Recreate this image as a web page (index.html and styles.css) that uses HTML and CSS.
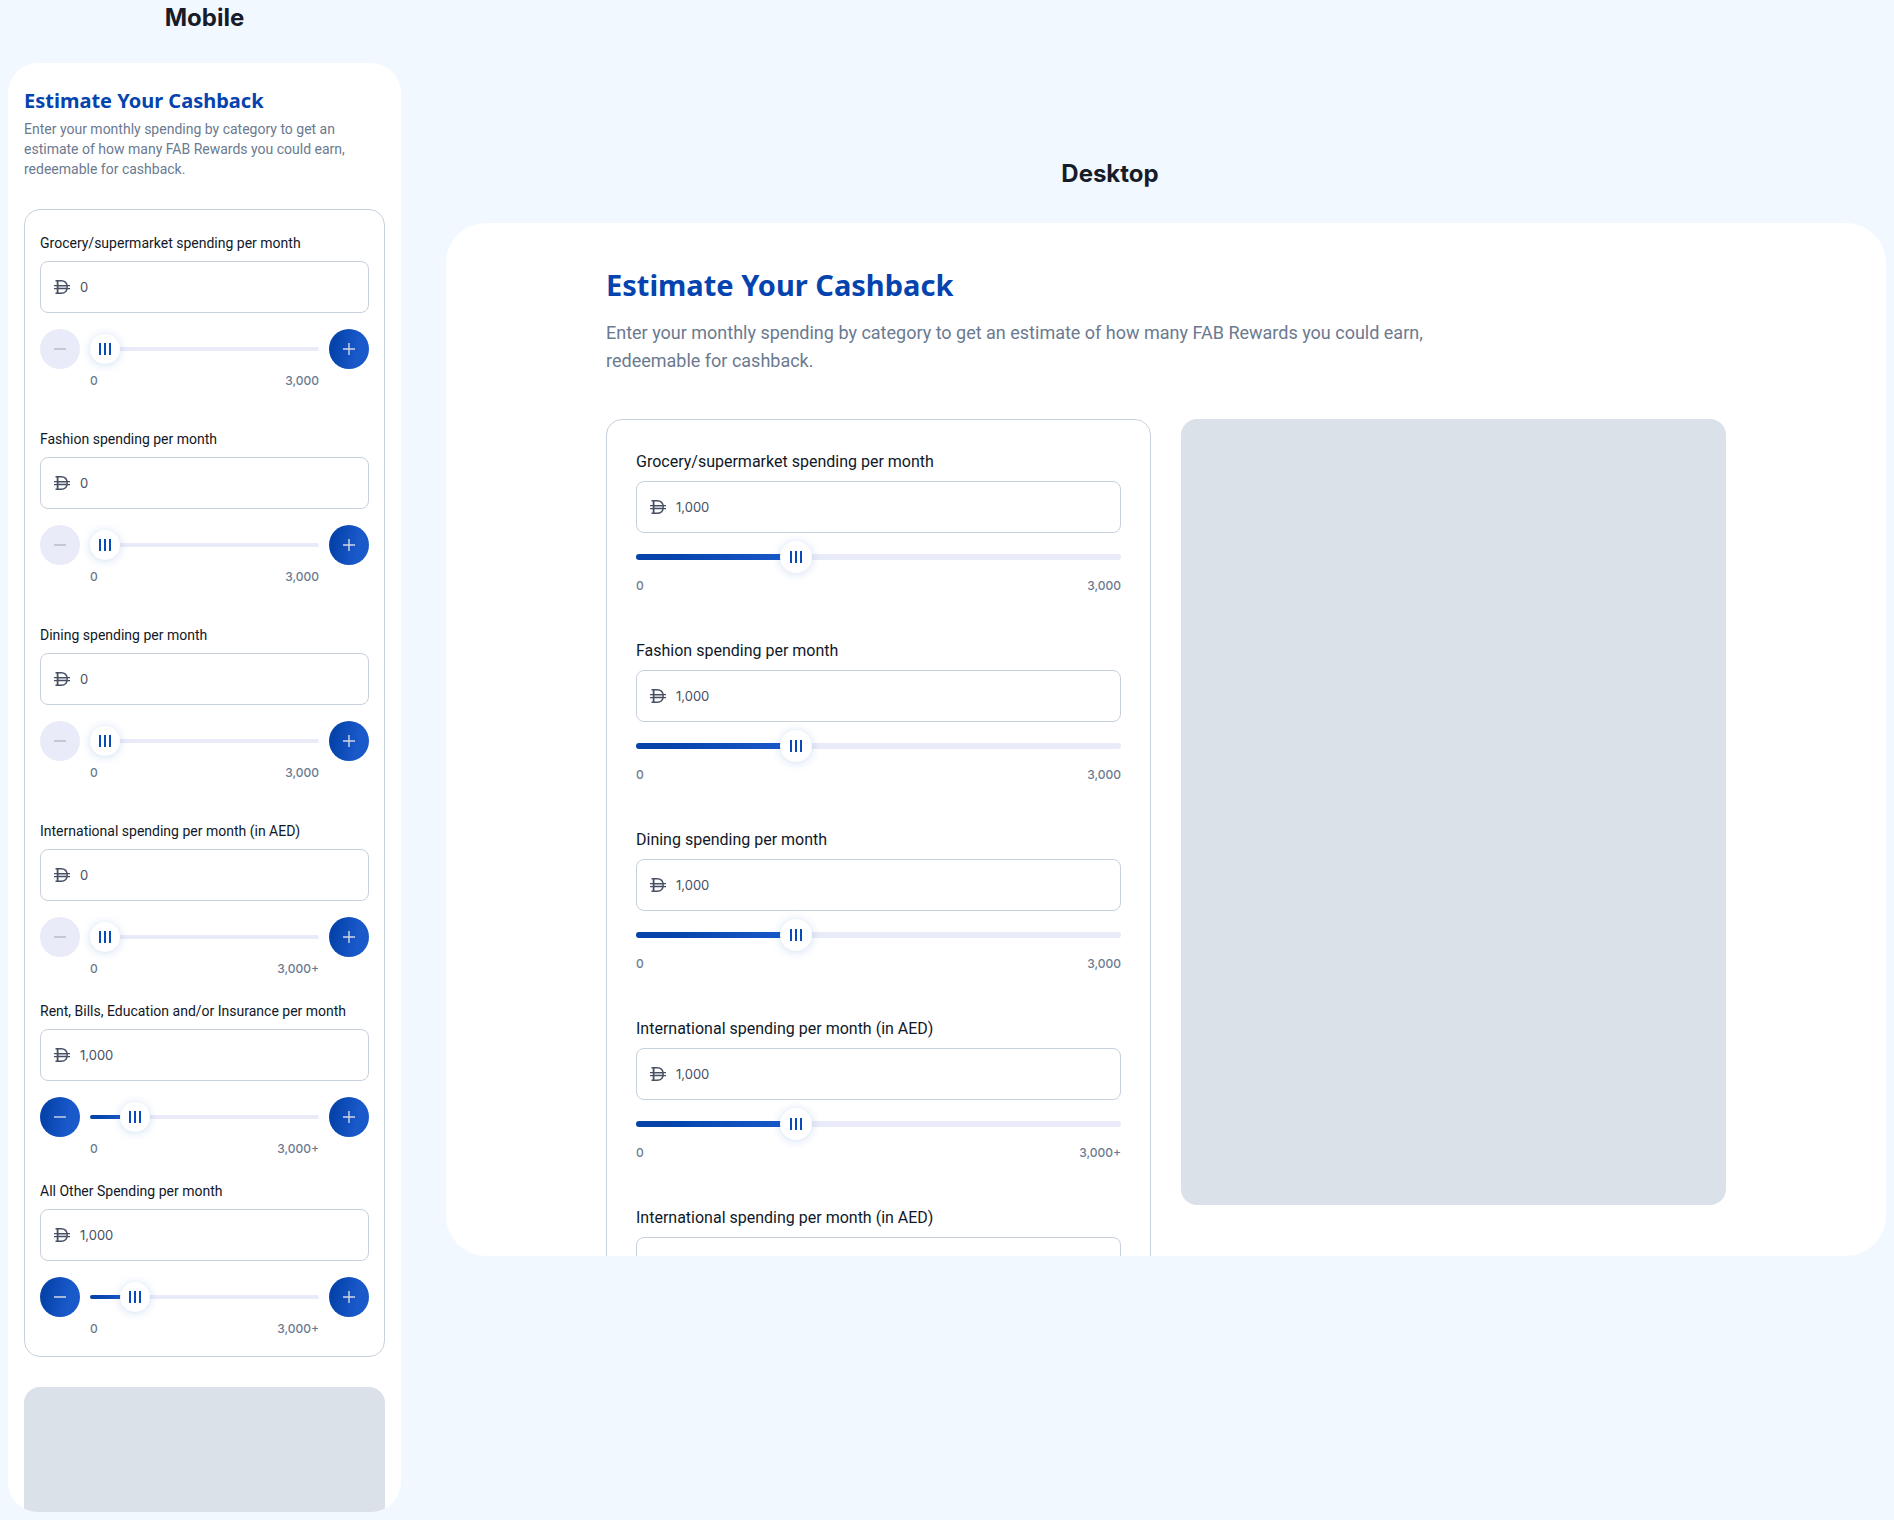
FILE: index.html
```html
<!DOCTYPE html>
<html lang="en">
  <head>
    <meta charset="utf-8">
    <meta name="viewport" content="width=device-width, initial-scale=1">
    <title>Cashback calculator</title>
    <link rel="stylesheet" href="styles.css">
  </head>
  <body>
    <svg class="sprite" aria-hidden="true">
      <symbol id="dirham" viewBox="0 0 16 14">
        <path d="M1.5 .7H7C11 .7 13.2 3 13.2 7S11 13.3 7 13.3H1.5" fill="none" stroke="currentColor" stroke-width="1.4"/>
        <path d="M3 5.7H13V8.5H3Z" fill="currentColor" opacity=".3"/>
        <path d="M3.6 .7V13.3" stroke="currentColor" stroke-width="1.8"/>
        <path d="M0 5.6H16M0 8.6H16" fill="none" stroke="currentColor" stroke-width="1.2"/>
      </symbol>
      <symbol id="minus" viewBox="0 0 12 12">
        <path d="M0 6H12" stroke="currentColor" stroke-width="1.4"/>
      </symbol>
      <symbol id="plus" viewBox="0 0 12 12">
        <path d="M0 6H12M6 0V12" stroke="currentColor" stroke-width="1.4"/>
      </symbol>
    </svg>

    <main class="boards">
      <section class="board mobile">
        <h2 class="board-name">Mobile</h2>
        <div class="card">
          <h1 class="title">Estimate Your Cashback</h1>
          <p class="intro">Enter your monthly spending by category to get an estimate of how many FAB Rewards you could earn, redeemable for cashback.</p>
          <form class="form">
            <div class="field">
              <label class="label" for="m-grocery">Grocery/supermarket spending per month</label>
              <div class="amount"><svg class="currency"><use href="#dirham"/></svg><input id="m-grocery" type="text" value="0"></div>
              <div class="controls">
                <button class="step" type="button" aria-label="Decrease" disabled><svg><use href="#minus"/></svg></button>
                <input class="slider" type="range" aria-label="Grocery/supermarket spending per month" min="0" max="3000" value="0" style="--fill: 0%">
                <button class="step" type="button" aria-label="Increase"><svg><use href="#plus"/></svg></button>
              </div>
              <div class="limits"><span>0</span><span>3,000</span></div>
            </div>
            <div class="field">
              <label class="label" for="m-fashion">Fashion spending per month</label>
              <div class="amount"><svg class="currency"><use href="#dirham"/></svg><input id="m-fashion" type="text" value="0"></div>
              <div class="controls">
                <button class="step" type="button" aria-label="Decrease" disabled><svg><use href="#minus"/></svg></button>
                <input class="slider" type="range" aria-label="Fashion spending per month" min="0" max="3000" value="0" style="--fill: 0%">
                <button class="step" type="button" aria-label="Increase"><svg><use href="#plus"/></svg></button>
              </div>
              <div class="limits"><span>0</span><span>3,000</span></div>
            </div>
            <div class="field">
              <label class="label" for="m-dining">Dining spending per month</label>
              <div class="amount"><svg class="currency"><use href="#dirham"/></svg><input id="m-dining" type="text" value="0"></div>
              <div class="controls">
                <button class="step" type="button" aria-label="Decrease" disabled><svg><use href="#minus"/></svg></button>
                <input class="slider" type="range" aria-label="Dining spending per month" min="0" max="3000" value="0" style="--fill: 0%">
                <button class="step" type="button" aria-label="Increase"><svg><use href="#plus"/></svg></button>
              </div>
              <div class="limits"><span>0</span><span>3,000</span></div>
            </div>
            <div class="field">
              <label class="label" for="m-international">International spending per month (in AED)</label>
              <div class="amount"><svg class="currency"><use href="#dirham"/></svg><input id="m-international" type="text" value="0"></div>
              <div class="controls">
                <button class="step" type="button" aria-label="Decrease" disabled><svg><use href="#minus"/></svg></button>
                <input class="slider" type="range" aria-label="International spending per month" min="0" max="6600" value="0" style="--fill: 0%">
                <button class="step" type="button" aria-label="Increase"><svg><use href="#plus"/></svg></button>
              </div>
              <div class="limits"><span>0</span><span>3,000+</span></div>
            </div>
            <div class="field tight">
              <label class="label" for="m-bills">Rent, Bills, Education and/or Insurance per month</label>
              <div class="amount"><svg class="currency"><use href="#dirham"/></svg><input id="m-bills" type="text" value="1,000"></div>
              <div class="controls">
                <button class="step" type="button" aria-label="Decrease"><svg><use href="#minus"/></svg></button>
                <input class="slider" type="range" aria-label="Rent, bills, education and/or insurance per month" min="0" max="6600" value="1000" style="--fill: 15%">
                <button class="step" type="button" aria-label="Increase"><svg><use href="#plus"/></svg></button>
              </div>
              <div class="limits"><span>0</span><span>3,000+</span></div>
            </div>
            <div class="field tight">
              <label class="label" for="m-other">All Other Spending per month</label>
              <div class="amount"><svg class="currency"><use href="#dirham"/></svg><input id="m-other" type="text" value="1,000"></div>
              <div class="controls">
                <button class="step" type="button" aria-label="Decrease"><svg><use href="#minus"/></svg></button>
                <input class="slider" type="range" aria-label="All other spending per month" min="0" max="6600" value="1000" style="--fill: 15%">
                <button class="step" type="button" aria-label="Increase"><svg><use href="#plus"/></svg></button>
              </div>
              <div class="limits"><span>0</span><span>3,000+</span></div>
            </div>
          </form>
          <div class="result"></div>
        </div>
      </section>

      <section class="board desktop">
        <h2 class="board-name">Desktop</h2>
        <div class="card">
          <div class="content">
            <h1 class="title">Estimate Your Cashback</h1>
            <p class="intro">Enter your monthly spending by category to get an estimate of how many FAB Rewards you could earn, redeemable for cashback.</p>
            <div class="columns">
              <form class="form">
                <div class="field">
                  <label class="label" for="d-grocery">Grocery/supermarket spending per month</label>
                  <div class="amount"><svg class="currency"><use href="#dirham"/></svg><input id="d-grocery" type="text" value="1,000"></div>
                  <input class="slider" type="range" aria-label="Grocery/supermarket spending per month" min="0" max="3150" value="1000" style="--fill: 32%">
                  <div class="limits"><span>0</span><span>3,000</span></div>
                </div>
                <div class="field">
                  <label class="label" for="d-fashion">Fashion spending per month</label>
                  <div class="amount"><svg class="currency"><use href="#dirham"/></svg><input id="d-fashion" type="text" value="1,000"></div>
                  <input class="slider" type="range" aria-label="Fashion spending per month" min="0" max="3150" value="1000" style="--fill: 32%">
                  <div class="limits"><span>0</span><span>3,000</span></div>
                </div>
                <div class="field">
                  <label class="label" for="d-dining">Dining spending per month</label>
                  <div class="amount"><svg class="currency"><use href="#dirham"/></svg><input id="d-dining" type="text" value="1,000"></div>
                  <input class="slider" type="range" aria-label="Dining spending per month" min="0" max="3150" value="1000" style="--fill: 32%">
                  <div class="limits"><span>0</span><span>3,000</span></div>
                </div>
                <div class="field">
                  <label class="label" for="d-international">International spending per month (in AED)</label>
                  <div class="amount"><svg class="currency"><use href="#dirham"/></svg><input id="d-international" type="text" value="1,000"></div>
                  <input class="slider" type="range" aria-label="International spending per month" min="0" max="3150" value="1000" style="--fill: 32%">
                  <div class="limits"><span>0</span><span>3,000+</span></div>
                </div>
                <div class="field">
                  <label class="label" for="d-international-2">International spending per month (in AED)</label>
                  <div class="amount"><input id="d-international-2" type="text"></div>
                </div>
              </form>
              <div class="result"></div>
            </div>
          </div>
        </div>
      </section>
    </main>
  </body>
</html>
```

FILE: styles.css
```css
* { box-sizing: border-box; }
body {
  margin: 0;
  background-color: #f1f8ff;
  font-family: Roboto, "Liberation Sans", sans-serif;
  font-size: 14px;
  color: #101828;
}
h1, h2, p { margin: 0; }
.sprite {
  position: absolute;
  width: 0;
  height: 0;
}
.boards {
  display: grid;
  grid-template-columns: 393px 1fr;
  gap: 45px;
  align-items: start;
  padding: 0 8px 8px;
}
.board-name {
  padding: 2px 0 29px;
  font-family: Inter, "Liberation Sans", sans-serif;
  font-size: 24px;
  line-height: 32px;
  font-weight: 700;
  text-align: center;
  color: #171c28;
}
.card {
  overflow: hidden;
  background-color: #fff;
}
.title {
  font-family: "Noto Sans", "Open Sans", sans-serif;
  font-weight: 700;
  color: #0544ae;
}
.intro { color: #6b7a90; }
.form {
  border: 1px solid #c8d0dc;
  border-radius: 16px;
}
.result {
  background-color: #dae1e8;
  border-radius: 16px;
}

/* Fields */
.field {
  display: flex;
  flex-direction: column;
}
.label { margin-bottom: 8px; }
.amount {
  display: flex;
  align-items: center;
  gap: 10px;
  height: 52px;
  padding: 0 13px;
  border: 1px solid #c8d0dc;
  border-radius: 8px;
  color: #475063;
}
.amount input {
  flex: 1;
  min-width: 0;
  padding: 0;
  border: 0;
  outline: 0;
  background: none;
  font-family: Inter, "Liberation Sans", sans-serif;
  font-size: 13px;
  color: inherit;
}
.currency {
  width: 16px;
  height: 14px;
}
.limits {
  display: flex;
  justify-content: space-between;
  font-family: Inter, "Liberation Sans", sans-serif;
  font-size: 12px;
  line-height: 16px;
  font-weight: 500;
  color: #6b7a90;
}

/* Buttons either side of the slider */
.controls {
  display: flex;
  align-items: center;
  gap: 10px;
  margin-top: 16px;
}
.step {
  display: flex;
  align-items: center;
  justify-content: center;
  flex: none;
  width: 40px;
  height: 40px;
  padding: 0;
  border: 0;
  border-radius: 50%;
  background: linear-gradient(100deg, #0543ab 15%, #1a59ca 70%);
  color: #d3d8e2;
}
.step svg {
  width: 12px;
  height: 12px;
}
.step:disabled {
  background: #e9ebf8;
  color: #b4b9c8;
}

/* Slider */
.slider {
  -webkit-appearance: none;
  appearance: none;
  --thumb: 30px;
  --track: 4px;
  flex: 1;
  width: 100%;
  min-width: 0;
  height: var(--thumb);
  margin: 0;
  background: none;
}
.slider::-webkit-slider-runnable-track {
  height: var(--track);
  border-radius: 4px;
  background: linear-gradient(90deg, #0543ab 20%, #1a59ca) 0 0 / var(--fill) 100% no-repeat, #e9ebf8;
}
.slider::-webkit-slider-thumb {
  -webkit-appearance: none;
  width: var(--thumb);
  height: var(--thumb);
  margin-top: calc((var(--track) - var(--thumb)) / 2);
  border-radius: 50%;
  background:
    linear-gradient(#0a49b8, #0a49b8) calc(50% - 5px) 50% / 2px 12px no-repeat,
    linear-gradient(#0a49b8, #0a49b8) 50% 50% / 2px 12px no-repeat,
    linear-gradient(#0a49b8, #0a49b8) calc(50% + 5px) 50% / 2px 12px no-repeat,
    #fff;
  box-shadow: 0 1px 10px rgba(26, 89, 202, 0.2);
}

/* Mobile */
.mobile .card {
  padding: 24px 16px 0;
  border-radius: 30px;
}
.mobile .title {
  font-size: 20px;
  line-height: 28px;
}
.mobile .intro {
  margin: 4px 0 30px;
  line-height: 20px;
}
.mobile .form { padding: 23px 15px 19px; }
.mobile .field + .field { margin-top: 40px; }
.mobile .field + .field.tight { margin-top: 24px; }
.mobile .label { line-height: 20px; }
.mobile .limits { padding: 4px 50px 0; }
.mobile .result {
  height: 125px;
  margin-top: 30px;
  border-radius: 16px 16px 0 0;
}

/* Desktop */
.desktop { padding-top: 156px; }
.desktop .board-name {
  padding-right: 112px;
  padding-bottom: 33px;
}
.desktop .card {
  max-height: 1033px;
  padding: 40px 40px 0;
  border-radius: 40px;
}
.content {
  max-width: 1120px;
  margin: 0 auto;
}
.desktop .title {
  font-size: 29px;
  line-height: 44px;
}
.desktop .intro {
  max-width: 860px;
  margin: 12px 0 44px;
  font-size: 18px;
  line-height: 28px;
}
.columns {
  display: grid;
  grid-template-columns: 1fr 1fr;
  gap: 30px;
  align-items: start;
}
.desktop .form { padding: 30px 29px; }
.desktop .field + .field { margin-top: 45px; }
.desktop .label {
  margin-bottom: 7px;
  font-size: 16px;
  line-height: 24px;
}
.desktop .slider {
  --thumb: 32px;
  --track: 6px;
  flex: none;
  margin-top: 8px;
}
.desktop .limits { padding-top: 5px; }
.desktop .result { height: 786px; }
```
